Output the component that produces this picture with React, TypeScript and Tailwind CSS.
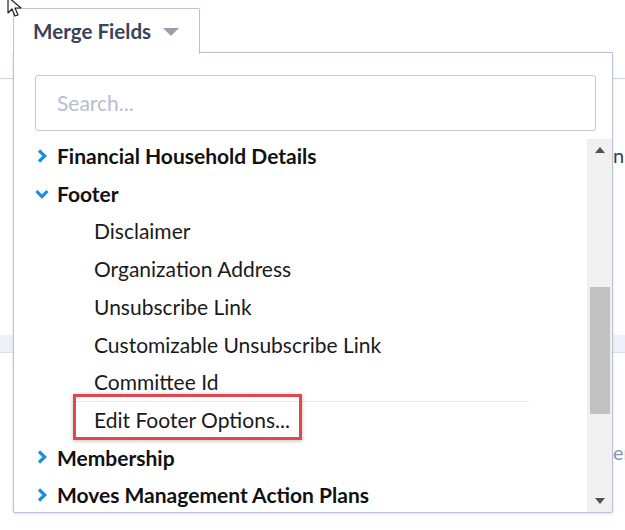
import React from 'react';

type Item = { label: string; kind: 'group' | 'open' | 'child' | 'action' };

const items: Item[] = [
    { label: 'Financial Household Details', kind: 'group' },
    { label: 'Footer', kind: 'open' },
    { label: 'Disclaimer', kind: 'child' },
    { label: 'Organization Address', kind: 'child' },
    { label: 'Unsubscribe Link', kind: 'child' },
    { label: 'Customizable Unsubscribe Link', kind: 'child' },
    { label: 'Committee Id', kind: 'child' },
    { label: 'Edit Footer Options...', kind: 'action' },
    { label: 'Membership', kind: 'group' },
    { label: 'Moves Management Action Plans', kind: 'group' },
];

const ChevronRight = () => (
    <svg width="12" height="14" viewBox="0 0 12 14" className="shrink-0">
        <path d="M3 1.5 L8.7 7 L3 12.5" fill="none" stroke="#1b8fd8" strokeWidth="3.2" strokeLinejoin="miter" />
    </svg>
);

const ChevronDown = () => (
    <svg width="14" height="12" viewBox="0 0 14 12" className="shrink-0">
        <path d="M1.5 3 L7 8.7 L12.5 3" fill="none" stroke="#1b8fd8" strokeWidth="3.2" strokeLinejoin="miter" />
    </svg>
);

const Cursor = () => (
    <svg width="20" height="22" viewBox="0 0 20 22" className="absolute left-[7px] top-[-4px] z-30">
        <path d="M1 1 L1 17 L5 13 L8 20 L11 19 L8 12 L14 12 Z" fill="white" stroke="#222" strokeWidth="1.2" strokeLinejoin="round" />
    </svg>
);

export default function App() {
    return (
        <div className="relative w-[625px] h-[530px] bg-white overflow-hidden font-['Lato','Liberation_Sans',sans-serif]">
            {/* underlying page */}
            <div className="absolute inset-x-0 top-[78px] border-t border-[#cdd4e2]" />
            <div className="absolute inset-x-0 top-[335px] h-[18px] bg-[#eef1f7] border-b border-[#dde2ec]" />
            <div className="absolute left-[613px] top-[140px] text-[20px] text-[#3a3f4d]">n</div>
            <div className="absolute left-[613px] top-[437px] w-[12px] overflow-hidden text-[20px] text-[#8b95ad]">er</div>

            <Cursor />

            {/* tab */}
            <div className="absolute left-[13px] top-[8px] w-[187px] h-[46px] z-20 bg-white border border-b-0 border-[#b9c3d6] rounded-t-[2px] flex items-center pl-[19px] gap-[12px]">
                <span className="text-[20.6px] font-bold text-[#3b4359]">Merge Fields</span>
                <svg width="16" height="9" viewBox="0 0 16 9" className="mt-[1px]">
                    <path d="M0 0 L16 0 L8 8 Z" fill="#9aa0aa" />
                </svg>
            </div>

            {/* dropdown */}
            <div className="absolute left-[13px] top-[52px] w-[600px] h-[461px] z-10 bg-white border border-[#b9c3d6] rounded-b-[2px] shadow-[0_1px_3px_rgba(120,130,150,0.25)] flex flex-col">
                <div className="pl-[21px] pt-[22px] pb-[8px]">
                    <div className="w-[561px] h-[56px] border border-[#c3cad8] rounded-[3px] flex items-center pl-[21px] text-[21px] text-[#b6bed3]">
                        Search...
                    </div>
                </div>
                <div className="flex flex-1 min-h-0">
                    <div className="flex-1 flex flex-col -mt-[2px]">
                        {items.map((it) => (
                            <div key={it.label} className="h-[37.7px] shrink-0 flex items-center">
                                {it.kind === 'group' && (
                                    <div className="flex items-center pl-[22px] gap-[9px]">
                                        <ChevronRight />
                                        <span className="text-[21px] font-bold text-[#111]">{it.label}</span>
                                    </div>
                                )}
                                {it.kind === 'open' && (
                                    <div className="flex items-center pl-[21px] gap-[8px]">
                                        <ChevronDown />
                                        <span className="text-[21px] font-bold text-[#111]">{it.label}</span>
                                    </div>
                                )}
                                {it.kind === 'child' && (
                                    <span className="pl-[80px] text-[21px] text-[#1a1a1a]">{it.label}</span>
                                )}
                                {it.kind === 'action' && (
                                    <div className="relative h-full w-full flex items-center">
                                        <div className="absolute left-[62px] w-[453px] top-0 border-t border-[#e6e9ef]" />
                                        <span className="pl-[80px] text-[21px] text-[#1a1a1a]">{it.label}</span>
                                        <div className="absolute left-[59px] top-[-7px] w-[229px] h-[46px] border-[3px] border-[#e2474d] shadow-[0_1px_4px_rgba(0,0,0,0.25)]" />
                                    </div>
                                )}
                            </div>
                        ))}
                    </div>
                    {/* scrollbar */}
                    <div className="w-[25px] bg-[#f0f0f0] flex flex-col items-center">
                        <div className="h-[22px] w-full flex items-center justify-center">
                            <svg width="10" height="6" viewBox="0 0 10 6"><path d="M0 6 L5 0 L10 6 Z" fill="#505050" /></svg>
                        </div>
                        <div className="h-[126px]" />
                        <div className="w-[20px] h-[127px] bg-[#c1c1c1]" />
                        <div className="flex-1" />
                        <div className="h-[22px] w-full flex items-center justify-center">
                            <svg width="10" height="6" viewBox="0 0 10 6"><path d="M0 0 L10 0 L5 6 Z" fill="#505050" /></svg>
                        </div>
                    </div>
                </div>
            </div>
        </div>
    );
}
